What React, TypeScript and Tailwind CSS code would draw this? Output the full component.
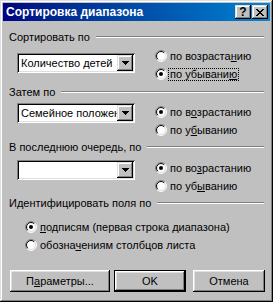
import { ReactNode } from 'react'

const raised =
  'shadow-[inset_-1px_-1px_#000,inset_1px_1px_#dfdfdf,inset_-2px_-2px_#808080,inset_2px_2px_#fff]'
const btnRaised =
  'shadow-[inset_-1px_-1px_#000,inset_1px_1px_#fff,inset_-2px_-2px_#808080,inset_2px_2px_#dfdfdf]'
const sunken =
  'shadow-[inset_1px_1px_#808080,inset_-1px_-1px_#fff,inset_2px_2px_#000,inset_-2px_-2px_#dfdfdf]'

function RadioIcon({ checked }: { checked?: boolean }) {
  const arc = (r: number, tl: boolean) => {
    const d = r * 0.7071
    const bl = `${6 - d} ${6 + d}`
    const tr = `${6 + d} ${6 - d}`
    return tl ? `M ${bl} A ${r} ${r} 0 0 1 ${tr}` : `M ${tr} A ${r} ${r} 0 0 1 ${bl}`
  }
  return (
    <svg width="12" height="12" viewBox="0 0 12 12" className="shrink-0">
      <circle cx="6" cy="6" r="5" fill="#fff" />
      <path d={arc(5.5, true)} stroke="#808080" fill="none" />
      <path d={arc(5.5, false)} stroke="#fff" fill="none" />
      <path d={arc(4.5, true)} stroke="#000" fill="none" />
      <path d={arc(4.5, false)} stroke="#dfdfdf" fill="none" />
      {checked && <circle cx="6" cy="6" r="2" fill="#000" />}
    </svg>
  )
}

function Radio({ checked, focus, children }: { checked?: boolean; focus?: boolean; children: ReactNode }) {
  return (
    <div className="h-[18px] flex items-center">
      <RadioIcon checked={checked} />
      {focus ? (
        <span className="ml-[1px] px-[1px] border border-dotted border-black leading-[11px]">{children}</span>
      ) : (
        <span className="ml-[3px]">{children}</span>
      )}
    </div>
  )
}

function GroupLabel({ children, className }: { children: ReactNode; className?: string }) {
  return (
    <div className={`h-[16px] flex items-center pl-[6px] pr-[6px] ${className ?? ''}`}>
      <span className="whitespace-nowrap">{children}</span>
      <div className="flex-1 ml-[6px] h-[2px] bg-white border-t border-[#808080]" />
    </div>
  )
}

function Combo({ value }: { value: string }) {
  return (
    <div className={`w-[118px] h-[20px] bg-white flex p-[2px] ${sunken}`}>
      <div className="flex-1 overflow-hidden whitespace-nowrap pl-[2px] leading-[16px]">{value}</div>
      <div className={`w-[16px] h-[16px] bg-[#c0c0c0] flex items-center justify-center ${raised}`}>
        <svg width="7" height="4" viewBox="0 0 7 4" shapeRendering="crispEdges">
          <rect x="0" y="0" width="7" height="1" fill="#000" />
          <rect x="1" y="1" width="5" height="1" fill="#000" />
          <rect x="2" y="2" width="3" height="1" fill="#000" />
          <rect x="3" y="3" width="1" height="1" fill="#000" />
        </svg>
      </div>
    </div>
  )
}

function Button({ children, width, isDefault }: { children: ReactNode; width: string; isDefault?: boolean }) {
  if (isDefault) {
    return (
      <div className={`${width} h-[22px] border border-black`}>
        <div className={`w-full h-full flex items-center justify-center ${btnRaised}`}>{children}</div>
      </div>
    )
  }
  return <div className={`${width} h-[22px] flex items-center justify-center ${btnRaised}`}>{children}</div>
}

export default function App() {
  return (
    <div
      className={`w-[273px] h-[302px] bg-[#c0c0c0] p-[3px] flex flex-col text-[11px] text-black font-['Liberation_Sans',Arial,sans-serif] select-none ${raised}`}
    >
      {/* Title bar */}
      <div className="h-[18px] bg-linear-to-r from-[#000080] to-[#1084d0] flex items-center pl-[3px] pr-[2px]">
        <span className="flex-1 text-white font-bold text-[12px] whitespace-nowrap">Сортировка диапазона</span>
        <div className={`w-[16px] h-[14px] bg-[#c0c0c0] flex items-center justify-center font-bold text-[12px] leading-[12px] ${raised}`}>
          ?
        </div>
        <div className={`w-[16px] h-[14px] ml-[1px] bg-[#c0c0c0] flex items-center justify-center ${raised}`}>
          <svg width="8" height="7" viewBox="0 0 8 7" shapeRendering="crispEdges" fill="#000">
            <rect x="0" y="0" width="2" height="1" />
            <rect x="6" y="0" width="2" height="1" />
            <rect x="1" y="1" width="2" height="1" />
            <rect x="5" y="1" width="2" height="1" />
            <rect x="2" y="2" width="4" height="1" />
            <rect x="3" y="3" width="2" height="1" />
            <rect x="2" y="4" width="4" height="1" />
            <rect x="1" y="5" width="2" height="1" />
            <rect x="5" y="5" width="2" height="1" />
            <rect x="0" y="6" width="2" height="1" />
            <rect x="6" y="6" width="2" height="1" />
          </svg>
        </div>
      </div>

      {/* Сортировать по */}
      <GroupLabel className="mt-[8px]">Сортировать по</GroupLabel>
      <div className="flex h-[38px]">
        <div className="ml-[14px] mt-[8px]">
          <Combo value="Количество детей" />
        </div>
        <div className="ml-[20px] mt-[2px]">
          <Radio>
            по возраста<u>н</u>ию
          </Radio>
          <Radio checked focus>
            по убывани<u>ю</u>
          </Radio>
        </div>
      </div>

      {/* Затем по */}
      <GroupLabel className="mt-[1px]">Затем по</GroupLabel>
      <div className="flex h-[39px]">
        <div className="ml-[14px] mt-[3px]">
          <Combo value="Семейное положение" />
        </div>
        <div className="ml-[20px] mt-[3px]">
          <Radio checked>
            по в<u>о</u>зрастанию
          </Radio>
          <Radio>
            по у<u>б</u>ыванию
          </Radio>
        </div>
      </div>

      {/* В последнюю очередь, по */}
      <GroupLabel>В последнюю очередь, по</GroupLabel>
      <div className="flex h-[40px]">
        <div className="ml-[14px] mt-[5px]">
          <Combo value="" />
        </div>
        <div className="ml-[20px] mt-[4px]">
          <Radio checked>
            по во<u>з</u>растанию
          </Radio>
          <Radio>
            по уб<u>ы</u>ванию
          </Radio>
        </div>
      </div>

      {/* Идентифицировать поля по */}
      <GroupLabel>Идентифицировать поля по</GroupLabel>
      <div className="pl-[22px] mt-[7px]">
        <Radio checked>
          <u>п</u>одписям (первая строка диапазона)
        </Radio>
        <Radio>
          обозна<u>ч</u>ениям столбцов листа
        </Radio>
      </div>

      {/* Buttons */}
      <div className="flex mt-[16px] pl-[7px]">
        <Button width="w-[100px]">
          П<u>а</u>раметры...
        </Button>
        <div className="ml-[4px]">
          <Button width="w-[72px]" isDefault>
            OK
          </Button>
        </div>
        <div className="ml-[7px]">
          <Button width="w-[72px]">Отмена</Button>
        </div>
      </div>
    </div>
  )
}
